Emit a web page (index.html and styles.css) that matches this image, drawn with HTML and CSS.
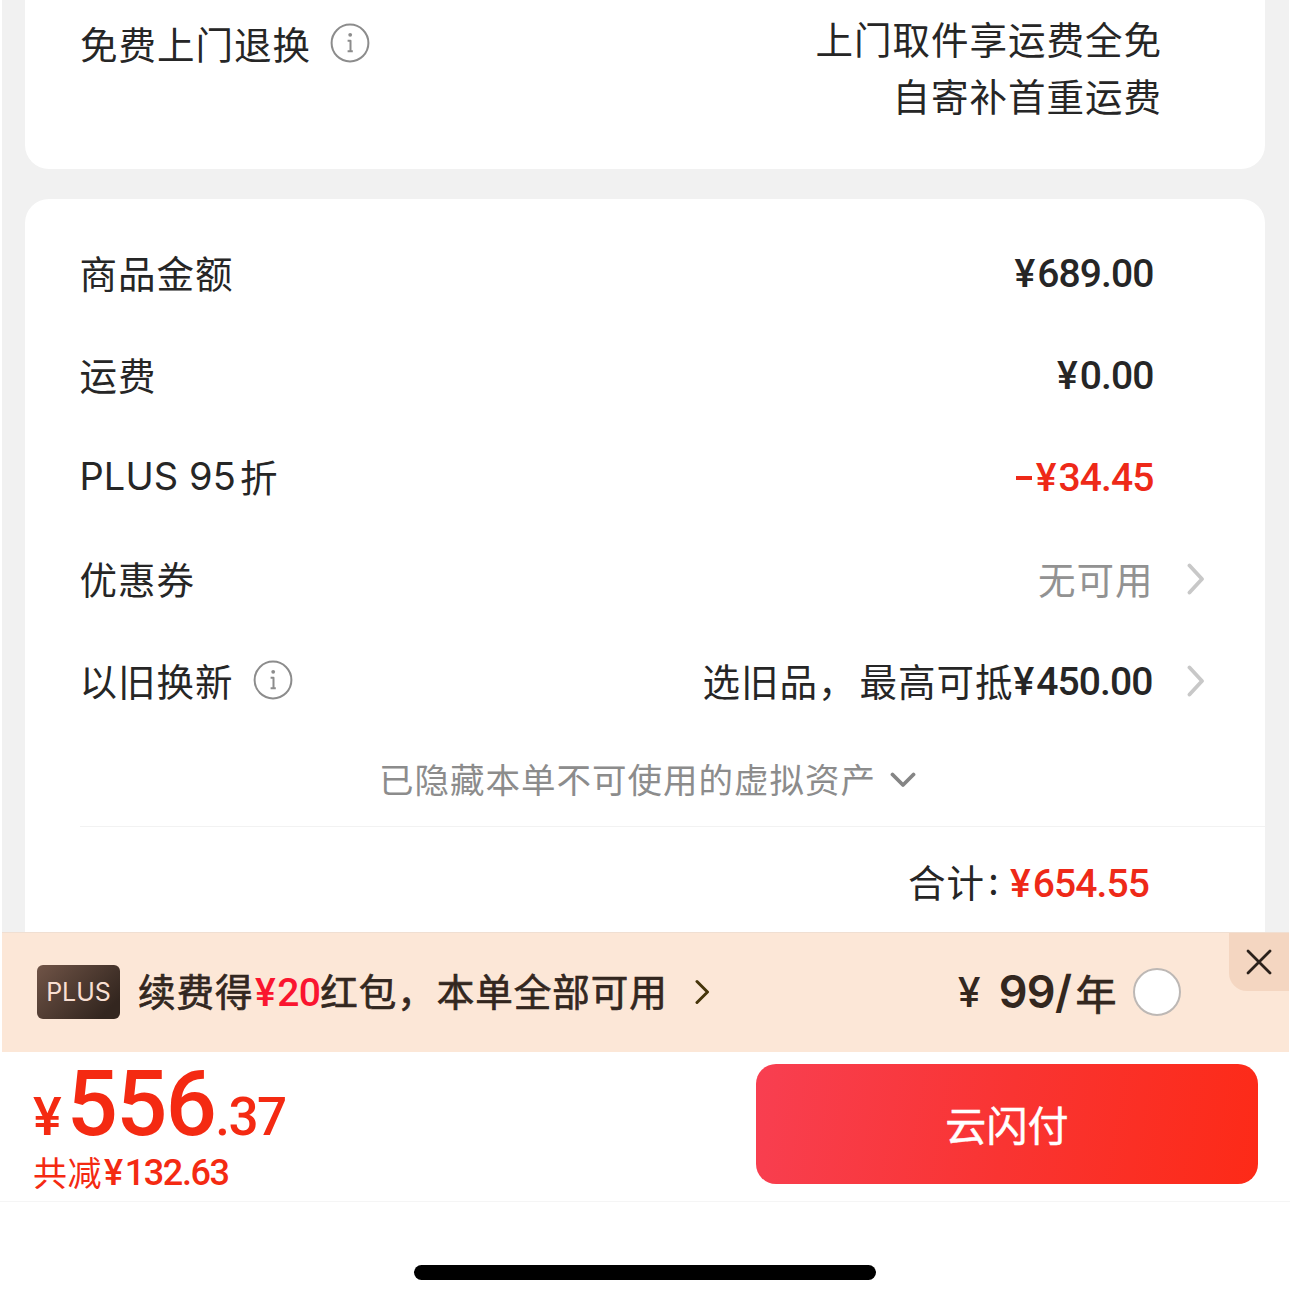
FILE: index.html
```html
<!DOCTYPE html>
<html lang="zh-CN">
<head>
<meta charset="utf-8">
<title>确认订单</title>
<link rel="stylesheet" href="styles.css">
</head>
<body>
<div class="screen">
  <main class="content">
    <section class="card card-return">
      <div class="label"><span>免费上门退换</span>
        <svg class="info" viewBox="0 0 40 40"><circle cx="20" cy="20" r="18.4"/><circle class="dot" cx="20.2" cy="11.8" r="1.9"/><path d="M17.6 17.8h2.9v9.9M17.6 28.3h5.2"/></svg>
      </div>
      <div class="return-note"><span>上门取件享运费全免</span><span>自寄补首重运费</span></div>
    </section>
    <section class="card card-bill">
      <div class="row"><span class="label">商品金额</span><span class="num"><span class="y">¥</span>689.00</span></div>
      <div class="row"><span class="label">运费</span><span class="num"><span class="y">¥</span>0.00</span></div>
      <div class="row"><span class="label"><span class="latin">PLUS 95</span>折</span><span class="num minus"><i class="dash"></i><span class="y">¥</span>34.45</span></div>
      <div class="row"><span class="label">优惠券</span><span class="value muted">无可用</span>
        <svg class="chev" viewBox="0 0 18 32"><path d="M2.5 2.5 15 16 2.5 29.5"/></svg></div>
      <div class="row"><div class="label"><span>以旧换新</span>
        <svg class="info" viewBox="0 0 40 40"><circle cx="20" cy="20" r="18.4"/><circle class="dot" cx="20.2" cy="11.8" r="1.9"/><path d="M17.6 17.8h2.9v9.9M17.6 28.3h5.2"/></svg></div>
        <span class="value">选旧品<span class="comma">，</span>最高可抵</span><span class="num"><span class="y">¥</span>450.00</span>
        <svg class="chev" viewBox="0 0 18 32"><path d="M2.5 2.5 15 16 2.5 29.5"/></svg></div>
      <div class="folded"><span class="folded-text">已隐藏本单不可使用的虚拟资产</span>
        <svg class="down" viewBox="0 0 26 18"><path d="M2.5 3.5 13 14 23.5 3.5"/></svg></div>
      <div class="total"><span class="total-label">合计</span><span class="colon">:</span><span class="num red"><span class="y">¥</span>654.55</span></div>
    </section>
  </main>
  <aside class="plus">
    <span class="badge">PLUS</span>
    <span class="plus-text">续费得<b class="bonus"><span class="y">¥</span>20</b>红包<span class="comma">，</span>本单全部可用</span>
    <svg class="go" viewBox="0 0 16 26"><path d="M2 2.5 12.5 13 2 23.5"/></svg>
    <span class="fee"><span class="yen">¥</span><span class="fee-num">99/</span><span>年</span></span>
    <span class="radio"></span>
    <span class="close"><svg viewBox="0 0 26 26"><path d="M2 2 24 24M24 2 2 24"/></svg></span>
  </aside>
  <footer class="pay">
    <div class="sum">
      <div class="price"><span class="p-yen">¥</span><span class="p-int">556</span><span class="p-dec">.37</span></div>
      <div class="saved"><span class="saved-label">共减</span><span class="saved-num"><span class="y">¥</span>132.63</span></div>
    </div>
    <button class="btn">云闪付</button>
  </footer>
  <div class="home"><span class="home-bar"></span></div>
</div>
</body>
</html>
```

FILE: styles.css
```css
* { box-sizing: border-box; }
body {
  margin: 0;
  background: #fff;
  color: #262626;
  font-family: "Noto Sans CJK SC", sans-serif;
  font-size: 37.5px;
  letter-spacing: 1px;
  line-height: 56px;
  white-space: nowrap;
}
svg { flex: none; fill: none; stroke-linecap: round; stroke-linejoin: round; }
.screen { width: 1290px; height: 1290px; overflow: hidden; display: flex; flex-direction: column; }

.content {
  height: 932px;
  margin: 0 1.5px;
  padding: 0 23.5px;
  background: #f1f1f1;
  display: flex;
  flex-direction: column;
  gap: 30px;
}
.card { background: #fff; }
.card-return {
  height: 169px;
  border-radius: 0 0 24px 24px;
  padding: 9px 103px 0 55px;
  display: flex;
  justify-content: space-between;
}
.label { display: flex; align-items: center; height: 67px; }
.info { width: 40px; height: 40px; margin-left: 19px; stroke: #8c8c8c; stroke-width: 2; }
.info path { stroke-width: 2; stroke-linecap: butt; }
.info .dot { fill: #8c8c8c; stroke: none; }
.return-note { display: flex; flex-direction: column; align-items: flex-end; line-height: 57px; }

.card-bill { height: 733px; border-radius: 24px 24px 0 0; padding-top: 24px; }
.row { height: 102px; padding: 0 111.5px 0 54.5px; display: flex; align-items: center; }
.row .label { margin-right: auto; padding-bottom: 4px; }
.value, .total-label, .folded-text { padding-bottom: 5px; }
.latin { font-family: Inter, sans-serif; font-size: 38px; letter-spacing: 0.1px; margin-right: 4px; }
.num { font-family: Roboto, sans-serif; font-weight: 500; font-size: 39px; letter-spacing: -0.9px; }
.y { display: inline-block; margin-right: 3px; }
.comma { margin-right: 3px; }
.muted { color: #929292; margin-right: -1px; }
.minus, .red { color: #ee2918; }
.minus { display: flex; align-items: center; }
.dash { width: 16px; height: 4px; background: currentColor; margin-right: 4px; }
.chev { width: 18px; height: 32px; margin: 0 -51px 3px 34px; stroke: #c8c8c8; stroke-width: 3.8; }
.folded {
  height: 94px;
  margin-left: 55px;
  padding: 0 0 0 299px;
  border-bottom: 1.5px solid #f2f2f2;
  display: flex;
  align-items: center;
  font-size: 34.5px;
  letter-spacing: 1px;
  color: #8c8c8c;
}
.folded-text { padding-bottom: 3px; }
.down { width: 26px; height: 18px; margin-left: 14px; stroke: #858585; stroke-width: 3.8; }
.total { height: 113px; padding-right: 116px; display: flex; justify-content: flex-end; align-items: center; }
.colon { width: 18px; text-align: center; margin-right: 7px; padding-bottom: 10px; }

.plus {
  position: relative;
  height: 120px;
  margin: 0 1.5px;
  padding: 0 0 2px 35.5px;
  background: #fce7d7;
  border-top: 1.5px solid #f0dfd2;
  color: #33271f;
  display: flex;
  align-items: center;
}
.badge {
  width: 83px;
  height: 54px;
  border-radius: 6px;
  background: linear-gradient(135deg, #705447, #33261f 85%);
  color: #f8dfd2;
  font: 400 25px/54px Inter, sans-serif;
  letter-spacing: 0;
  text-align: center;
}
.plus-text { margin-left: 18px; -webkit-text-stroke: 0.7px currentColor; }
.plus-text .comma { margin-right: 1px; }
.bonus { font-family: Roboto, sans-serif; font-weight: 500; font-size: 39px; letter-spacing: -0.6px; margin-left: 1.5px; color: #fa152f; -webkit-text-stroke: 0; }
.bonus .y { margin-right: 2px; }
.go { width: 16px; height: 26px; margin-left: 27px; stroke: #46350a; stroke-width: 3; }
.fee { margin-left: auto; display: flex; align-items: center; font-size: 41px; -webkit-text-stroke: 0.8px currentColor; }
.yen { font-family: Inter, sans-serif; font-size: 41px; font-weight: 500; margin-right: 17px; -webkit-text-stroke: 0; }
.fee-num { font-family: Inter, sans-serif; font-size: 45px; font-weight: 600; letter-spacing: -0.6px; margin-right: 4px; -webkit-text-stroke: 0; }
.radio { width: 48px; height: 48px; margin: 0 108px 0 15px; border: 2.5px solid #bdb8b5; border-radius: 50%; background: #fff; }
.close {
  position: absolute;
  top: 0;
  right: 0;
  width: 60px;
  height: 58px;
  border-bottom-left-radius: 18px;
  background: #f4d6c1;
  display: flex;
  align-items: center;
  justify-content: center;
}
.close svg { width: 26px; height: 26px; stroke: #2b211b; stroke-width: 2.8; }

.pay {
  height: 150px;
  padding: 12px 32px 0 33px;
  border-bottom: 1.5px solid #f5f5f5;
  display: flex;
  justify-content: space-between;
  color: #f42a12;
}
.price { height: 76px; padding-top: 5px; display: flex; align-items: baseline; font-family: Roboto, sans-serif; font-weight: 500; line-height: 72px; }
.p-yen { font-size: 54px; margin-right: 4px; }
.p-int { font-size: 90px; letter-spacing: -1.6px; }
.p-dec { font-size: 53px; letter-spacing: -1.6px; }
.saved { margin-top: 5px; height: 56px; display: flex; align-items: center; font-size: 34px; letter-spacing: 0.5px; line-height: 40px; }
.saved-label { padding-bottom: 2px; }
.saved-num { font-family: Roboto, sans-serif; font-weight: 500; font-size: 36px; letter-spacing: -1.4px; margin-left: 2px; }
.btn {
  width: 502px;
  height: 120px;
  padding: 0 0 3px;
  border: 0;
  border-radius: 20px;
  background: linear-gradient(100deg, #f83f51, #f93432 50%, #fd2a17);
  color: #fff;
  font: inherit;
  font-size: 41px;
  letter-spacing: 0.2px;
  -webkit-text-stroke: 0.5px currentColor;
}
.home { height: 88px; padding-top: 63px; }
.home-bar { display: block; width: 462px; height: 15px; margin: 0 auto; border-radius: 8px; background: #000; }
```
